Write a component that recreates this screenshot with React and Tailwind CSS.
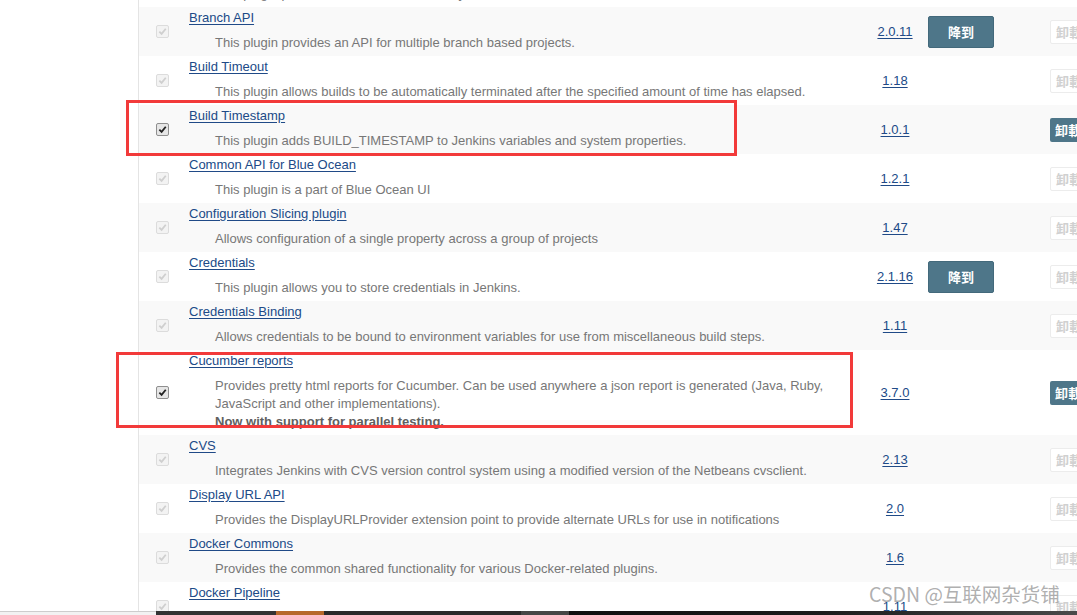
import React from "react";

const plugins = [
  {
    name: "Bouncy Castle API",
    desc: "This plugin provides a stable API to Bouncy Castle related tasks.",
    version: "2.17",
  },
  {
    name: "Branch API",
    desc: "This plugin provides an API for multiple branch based projects.",
    version: "2.0.11",
    downgrade: true,
  },
  {
    name: "Build Timeout",
    desc: "This plugin allows builds to be automatically terminated after the specified amount of time has elapsed.",
    version: "1.18",
  },
  {
    name: "Build Timestamp",
    desc: "This plugin adds BUILD_TIMESTAMP to Jenkins variables and system properties.",
    version: "1.0.1",
    enabled: true,
  },
  {
    name: "Common API for Blue Ocean",
    desc: "This plugin is a part of Blue Ocean UI",
    version: "1.2.1",
  },
  {
    name: "Configuration Slicing plugin",
    desc: "Allows configuration of a single property across a group of projects",
    version: "1.47",
  },
  {
    name: "Credentials",
    desc: "This plugin allows you to store credentials in Jenkins.",
    version: "2.1.16",
    downgrade: true,
  },
  {
    name: "Credentials Binding",
    desc: "Allows credentials to be bound to environment variables for use from miscellaneous build steps.",
    version: "1.11",
  },
  {
    name: "Cucumber reports",
    desc: "Provides pretty html reports for Cucumber. Can be used anywhere a json report is generated (Java, Ruby, JavaScript and other implementations).",
    extra: "Now with support for parallel testing.",
    version: "3.7.0",
    enabled: true,
  },
  {
    name: "CVS",
    desc: "Integrates Jenkins with CVS version control system using a modified version of the Netbeans cvsclient.",
    version: "2.13",
  },
  {
    name: "Display URL API",
    desc: "Provides the DisplayURLProvider extension point to provide alternate URLs for use in notifications",
    version: "2.0",
  },
  {
    name: "Docker Commons",
    desc: "Provides the common shared functionality for various Docker-related plugins.",
    version: "1.6",
  },
  {
    name: "Docker Pipeline",
    desc: "Build and use Docker containers from pipelines.",
    version: "1.11",
  },
];

const CheckBox = ({ enabled }) => (
  <div
    className={
      enabled
        ? "w-[13px] h-[13px] rounded-[2px] border border-[#8f8f8f] bg-[#e6e6e6] flex items-center justify-center"
        : "w-[13px] h-[13px] rounded-[2px] border border-[#dcdcdc] bg-[#f3f3f3] flex items-center justify-center"
    }
  >
    <svg width="9" height="9" viewBox="0 0 10 10">
      <path
        d="M1.5 5.2 L4 7.6 L8.6 2"
        fill="none"
        stroke={enabled ? "#222" : "#cfcfcf"}
        strokeWidth="2"
      />
    </svg>
  </div>
);

const Row = ({ plugin, index }) => (
  <div className={index % 2 ? "flex bg-[#f9f9f9]" : "flex bg-white"}>
    <div className="w-[50px] shrink-0 flex items-center pl-[17px]">
      <CheckBox enabled={plugin.enabled} />
    </div>
    <div className="w-[673px] shrink-0 pt-[2px] pb-[4px]">
      <a className="block leading-[18px] text-[#204a87] underline underline-offset-2">
        {plugin.name}
      </a>
      <div className="mt-[7px] pl-[26px] pr-[30px] leading-[18px] text-[#777]">
        {plugin.desc}
        {plugin.extra && (
          <div className="font-bold text-[#606060]">{plugin.extra}</div>
        )}
      </div>
    </div>
    <div className="w-[66px] shrink-0 flex items-center justify-center">
      <a className="text-[#204a87] underline underline-offset-2">{plugin.version}</a>
    </div>
    <div className="w-[66px] shrink-0 flex items-center">
      {plugin.downgrade && (
        <button className="w-[66px] h-[32px] rounded-[2px] border border-[#43697b] bg-[#4e7689] text-white font-bold font-['Noto_Sans_CJK_SC',sans-serif] text-[13px]">
          降到
        </button>
      )}
    </div>
    <div className="w-[56px] shrink-0" />
    <div className="shrink-0 flex items-center">
      {plugin.enabled ? (
        <button className="h-[24px] px-[5px] rounded-[2px] bg-[#4e7689] text-white font-bold font-['Noto_Sans_CJK_SC',sans-serif] text-[13px] whitespace-nowrap">
          卸載
        </button>
      ) : (
        <button className="h-[24px] px-[5px] rounded-[2px] border border-[#ececec] bg-white text-[#d0d0d0] font-bold font-['Noto_Sans_CJK_SC',sans-serif] text-[13px] whitespace-nowrap">
          卸載
        </button>
      )}
    </div>
  </div>
);

export default function App() {
  return (
    <div className="relative w-[1077px] h-[615px] overflow-hidden bg-white flex flex-col font-['Liberation_Sans',Arial,sans-serif] text-[13px]">
      <div className="flex flex-1 min-h-0">
        <div className="w-[139px] shrink-0 border-r border-[#e4e4e4]" />
        <div className="flex-1 overflow-hidden">
          <div className="-mt-[42px]">
            {plugins.map((p, i) => (
              <Row key={p.name} plugin={p} index={i} />
            ))}
          </div>
        </div>
      </div>

      <div className="h-[4px] flex shrink-0">
        <div className="w-[156px] border-t border-[#cdcdcd] bg-[#f2f2f2]" />
        <div className="w-[120px] bg-[#333]" />
        <div className="w-[48px] bg-[#b8692b]" />
        <div className="w-[197px] bg-[#2b2b2b]" />
        <div className="w-[48px] bg-[#464646]" />
        <div className="flex-1 bg-gradient-to-r from-[#0f0f0f] via-[#1c1c1c] to-[#4a4a4a]" />
      </div>

      <div className="absolute left-[126px] top-[100px] w-[611px] h-[56px] border-[3px] border-[#f23a3a]" />
      <div className="absolute left-[116px] top-[352px] w-[737px] h-[76px] border-[3px] border-[#f23a3a]" />

      <div className="absolute left-[869px] top-[581px] text-[19.5px] leading-[26px] text-[#9a9a9a]/80 font-['Noto_Sans_CJK_SC',sans-serif] whitespace-nowrap">
        CSDN @互联网杂货铺
      </div>
    </div>
  );
}
